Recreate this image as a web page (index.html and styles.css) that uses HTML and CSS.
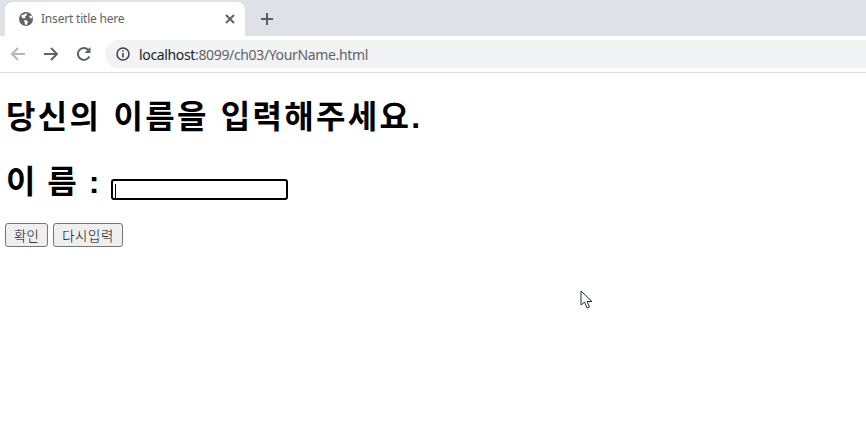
FILE: index.html
```html
<!DOCTYPE html>
<html lang="ko">
<head>
<meta charset="utf-8">
<title>Insert title here</title>
<link rel="stylesheet" href="styles.css">
</head>
<body>
<div class="tabstrip">
  <div class="tab">
    <svg class="favicon" width="16" height="16" viewBox="0 0 16 16"><circle cx="8" cy="8" r="7" fill="#5f6368"/><path d="M3 4.500 6 3.500 8.500 2 9 4 7 5.500 7.500 7 5.500 7.500 4 6.500ZM6 9l3 .5 1 1.500-1.500 3-1.500-.5-.5-2.500ZM11 5l2.500-.5 1 2.500-2 .5Z" fill="#fff"/></svg>
    <span class="tab-title">Insert title here</span>
    <svg class="tab-close" width="10" height="10" viewBox="0 0 10 10"><path d="M1 1l8 8M9 1l-8 8" stroke="#5f6368" stroke-width="2"/></svg>
  </div>
  <svg class="newtab" width="14" height="14" viewBox="0 0 14 14"><path d="M7 1v12M1 7h12" stroke="#5f5a60" stroke-width="2"/></svg>
</div>
<div class="toolbar">
  <svg class="nav" width="18" height="18" viewBox="0 0 18 18"><path d="M16 9H3M9 3 3 9l6 6" fill="none" stroke="#b4b7bb" stroke-width="2"/></svg>
  <svg class="nav" width="18" height="18" viewBox="0 0 18 18"><path d="M2 9h13M9 3l6 6-6 6" fill="none" stroke="#5f6368" stroke-width="2"/></svg>
  <svg class="nav" width="18" height="18" viewBox="0 0 18 18"><path d="M14.300 11.500A6 6 0 1 1 13.300 4.800" fill="none" stroke="#5f6368" stroke-width="2"/><path d="M15.500 2v6h-6z" fill="#5f6368"/></svg>
  <div class="omnibox">
    <svg class="info" width="14" height="14" viewBox="0 0 14 14"><circle cx="7" cy="7" r="6" fill="none" stroke="#3c4043" stroke-width="1.500"/><path d="M7 6v4.500M7 3.300v1.500" stroke="#3c4043" stroke-width="1.500"/></svg>
    <span class="url"><span class="host">localhost</span>:8099/ch03/YourName.html</span>
  </div>
</div>
<main class="page">
  <h1 class="heading">당신의 이름을 입력해주세요.</h1>
  <form>
    <h1 class="heading name-row"><span class="name-label">이 름 :</span><input class="name-input" type="text"><span class="caret"></span></h1>
    <div class="buttons">
      <button type="button" class="btn">확인</button>
      <button type="button" class="btn btn-wide">다시입력</button>
    </div>
  </form>
</main>
<svg class="cursor" width="14" height="20" viewBox="0 0 14 20"><path d="M1 1v14l3.500-3 2.500 6 2.500-1-2.500-5.500H12Z" fill="#fff" stroke="#222c3c" stroke-width="1"/></svg>
</body>
</html>
```

FILE: styles.css
```css
* { box-sizing: border-box; }
html, body { margin: 0; height: 100%; overflow: hidden; background: #fff; }
body { position: relative; font-family: "Liberation Sans", "Noto Sans CJK KR", sans-serif; color: #000; }

.tabstrip { height: 36px; background: #dee1e6; display: flex; align-items: flex-end; padding-left: 5px; }
.tab { width: 240px; height: 34px; background: #fff; border-radius: 8px 8px 0 0; display: flex; align-items: center; padding: 0 10px 0 13px; }
.favicon { flex: none; }
.tab-title { margin: 0 0 2px 7px; font: 12px "Noto Sans", sans-serif; letter-spacing: -.2px; color: #5f6368; flex: 1; }
.tab-close { flex: none; }
.newtab { margin: 0 0 10px 15px; }

.toolbar { height: 37px; background: #fff; border-bottom: 1px solid #dadce0; display: flex; align-items: center; padding: 0 0 0 9px; gap: 15px; }
.nav { flex: none; }
.omnibox { flex: 1; height: 28px; margin-left: -3px; background: #f1f3f4; border-radius: 14px 0 0 14px; display: flex; align-items: center; padding-left: 11px; }
.info { flex: none; }
.url { margin-left: 9px; font: 14px "Noto Sans", sans-serif; letter-spacing: -.35px; color: #5f6368; }
.host { color: #202124; }

.page { padding: 0 5px; }
.heading { font-size: 32px; font-weight: bold; line-height: 42px; margin: 0; padding-left: 1px; letter-spacing: 2.300px; word-spacing: 1px; font-family: "Liberation Sans", "Noto Sans CJK KR", sans-serif; }
.page > .heading { margin-top: 23px; }
.name-row { margin-top: 23px; position: relative; letter-spacing: 0; word-spacing: 0; }
.name-label { letter-spacing: 1.500px; word-spacing: 0; }
.name-input { width: 177px; height: 21px; padding: 1px 2px; border: 2px solid #000; border-radius: 3px; outline: none; background: #fff; margin: 0 0 0 10px; position: relative; top: 1px; }
.caret { position: absolute; left: 110px; bottom: 4px; width: 1px; height: 15px; background: #000; }
.buttons { display: flex; gap: 5px; margin-top: 20px; }
.btn { height: 24px; padding: 1px 8px; font: 300 13.333px "Noto Sans CJK KR", sans-serif; letter-spacing: .3px; background: #efefef; border: 1px solid #767676; border-radius: 3px; color: #000; }
.btn-wide { letter-spacing: .7px; }
.cursor { position: absolute; left: 580px; top: 290px; }
```
